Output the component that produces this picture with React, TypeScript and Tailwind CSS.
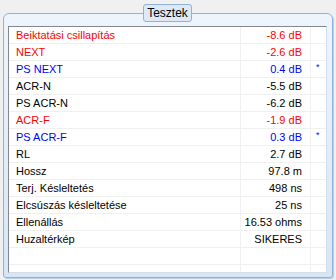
import React from "react";

type Row = { label: string; value: string; color: "red" | "blue" | "black"; star?: boolean };

const rows: Row[] = [
  { label: "Beiktatási csillapítás", value: "-8.6 dB", color: "red" },
  { label: "NEXT", value: "-2.6 dB", color: "red" },
  { label: "PS NEXT", value: "0.4 dB", color: "blue", star: true },
  { label: "ACR-N", value: "-5.5 dB", color: "black" },
  { label: "PS ACR-N", value: "-6.2 dB", color: "black" },
  { label: "ACR-F", value: "-1.9 dB", color: "red" },
  { label: "PS ACR-F", value: "0.3 dB", color: "blue", star: true },
  { label: "RL", value: "2.7 dB", color: "black" },
  { label: "Hossz", value: "97.8 m", color: "black" },
  { label: "Terj. Késleltetés", value: "498 ns", color: "black" },
  { label: "Elcsúszás késleltetése", value: "25 ns", color: "black" },
  { label: "Ellenállás", value: "16.53 ohms", color: "black" },
  { label: "Huzaltérkép", value: "SIKERES", color: "black" },
  { label: "", value: "", color: "black" },
  { label: "", value: "", color: "black" },
];

const colorClass = {
  red: "text-[#ff0000]",
  blue: "text-[#0000ff]",
  black: "text-black",
};

export default function App() {
  return (
    <div
      className="w-[336px] h-[280px] bg-[#f0f0f0] overflow-hidden pt-[13px] pl-[3px]"
      style={{ fontFamily: '"Liberation Sans", Arial, sans-serif' }}
    >
      <div className="relative w-[330px] h-[265px] border border-[#8fb2dd] rounded-t-[6px] rounded-b-[3px] bg-gradient-to-b from-[#eef4fc] to-[#d7e5f5] pt-[12px] pl-[4px] shadow-[1px_1px_0_#b9cfea]">
        <div className="absolute left-[139px] top-[-10px] w-[49px] h-[18px] border border-[#8fb2dd] rounded-[3px] bg-[#dde9f7] flex items-center justify-center text-[12px] text-black leading-none">
          Tesztek
        </div>
        <div className="w-[319px] h-[247px] border border-[#828790] border-r-[#d5dde8] border-b-[#d5dde8] bg-white overflow-hidden">
          {rows.map((r, i) => (
            <div key={i} className="flex h-[17px] border-b border-[#f0f0f0] text-[11px] leading-[16px]">
              <div className={`w-[232px] shrink-0 border-r border-[#f0f0f0] pl-[7px] whitespace-nowrap ${colorClass[r.color]}`}>
                {r.label}
              </div>
              <div className={`w-[70px] shrink-0 border-r border-[#f0f0f0] pr-[8px] text-right whitespace-nowrap ${colorClass[r.color]}`}>
                {r.value}
              </div>
              <div className="flex-1 text-[#0000ff] text-[9px] leading-[12px] pl-[5px]">
                {r.star ? "*" : ""}
              </div>
            </div>
          ))}
        </div>
      </div>
    </div>
  );
}
